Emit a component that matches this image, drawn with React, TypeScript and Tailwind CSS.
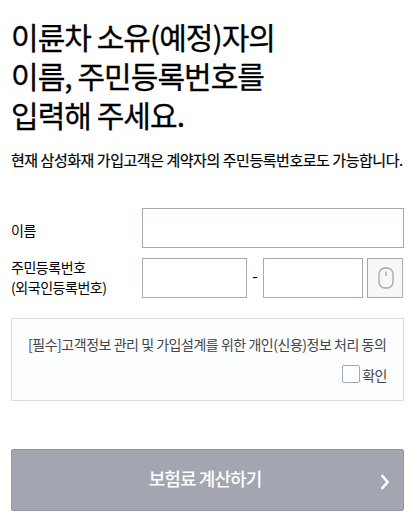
import React, { useState } from 'react';

// Mouse icon for the on-screen keypad button
const MouseIcon: React.FC = () => (
  <svg width="16" height="22" viewBox="0 0 16 22" fill="none" stroke="#a6a6a6" strokeWidth="1.3">
    <rect x="1" y="1" width="14" height="20" rx="6" />
    <path d="M8 4.5v4.5" />
  </svg>
);

const ArrowIcon: React.FC = () => (
  <svg width="10" height="16" viewBox="0 0 10 16" fill="none" stroke="#ffffff" strokeWidth="2.5">
    <path d="M1.6 1.2L7.6 8L1.6 14.8" />
  </svg>
);

const inputClass = 'h-10 rounded-none border border-[#a3a9b5] bg-white px-2 text-sm outline-none';

const App: React.FC = () => {
  const [name, setName] = useState<string>('');
  const [front, setFront] = useState<string>('');
  const [back, setBack] = useState<string>('');
  const [agreed, setAgreed] = useState<boolean>(false);

  return (
    <div className="h-[526px] w-[414px] overflow-hidden bg-white pt-[17px] pr-[10px] pl-[11px] font-['Noto_Sans_CJK_KR','Noto_Sans',sans-serif] text-black">
      <h1 className="h-[117px] text-[30px] leading-[39px] font-normal tracking-[-0.95px] whitespace-nowrap [-webkit-text-stroke:0.3px_#000]">
        이륜차 소유(예정)자의
        <br />
        이름, 주민등록번호를
        <br />
        입력해 주세요.
      </h1>
      <p className="mt-[15px] h-[22px] text-[15px] leading-[22px] font-normal tracking-[-0.46px] whitespace-nowrap [-webkit-text-stroke:0.2px_#000]">
        현재 삼성화재 가입고객은 계약자의 주민등록번호로도 가능합니다.
      </p>

      <form className="mt-[37px] flex flex-col" onSubmit={(e) => e.preventDefault()}>
        {/* Name */}
        <div className="flex items-center">
          <label className="w-[131px] pt-1 text-sm leading-5 tracking-[-0.5px]">이름</label>
          <input className={`${inputClass} w-[262px]`} value={name} onChange={(e) => setName(e.target.value)} />
        </div>

        {/* Registration number */}
        <div className="mt-[10px] flex h-10 items-center">
          <label className="w-[131px] pb-[2px] text-sm leading-5 tracking-[-0.45px] whitespace-nowrap">
            주민등록번호
            <br />
            (외국인등록번호)
          </label>
          <input className={`${inputClass} w-[105px]`} value={front} onChange={(e) => setFront(e.target.value)} />
          <span className="w-4 pb-[7px] text-center text-base leading-5">-</span>
          <input
            type="password"
            className={`${inputClass} w-[100px]`}
            value={back}
            onChange={(e) => setBack(e.target.value)}
          />
          <button
            type="button"
            aria-label="마우스 입력"
            className="ml-1 flex h-10 w-9 items-center justify-center border border-[#a9a9a9] bg-[#f7f7f7] pl-px"
          >
            <MouseIcon />
          </button>
        </div>

        {/* Consent */}
        <div className="mt-5 h-[83px] border border-[#d9dde5] bg-[#fcfdfe] pt-[15px] pr-4 pl-4 text-sm leading-5 tracking-[-0.47px] text-[#444444]">
          <p className="whitespace-nowrap">
            [필수]고객정보 관리 및 가입설계를 위한 개인(신용)정보 처리 동의
          </p>
          <label className="mt-[11px] flex h-[18px] items-center justify-end gap-[2px]">
            <input
              type="checkbox"
              className="h-[18px] w-[18px] appearance-none rounded-[2px] border border-[#a3a9b5] bg-white checked:bg-[#a3a5b1]"
              checked={agreed}
              onChange={(e) => setAgreed(e.target.checked)}
            />
            <span className="pt-px">확인</span>
          </label>
        </div>

        <button
          type="submit"
          className="relative mt-12 h-[62px] rounded-[2px] border border-[#9496a3] bg-[#a3a5b1] pr-[5px] pb-[5px] text-center text-lg font-medium tracking-[-0.92px] text-white"
        >
          보험료 계산하기
          <span className="absolute top-[24px] right-[13px]">
            <ArrowIcon />
          </span>
        </button>
      </form>
    </div>
  );
};

export default App;
